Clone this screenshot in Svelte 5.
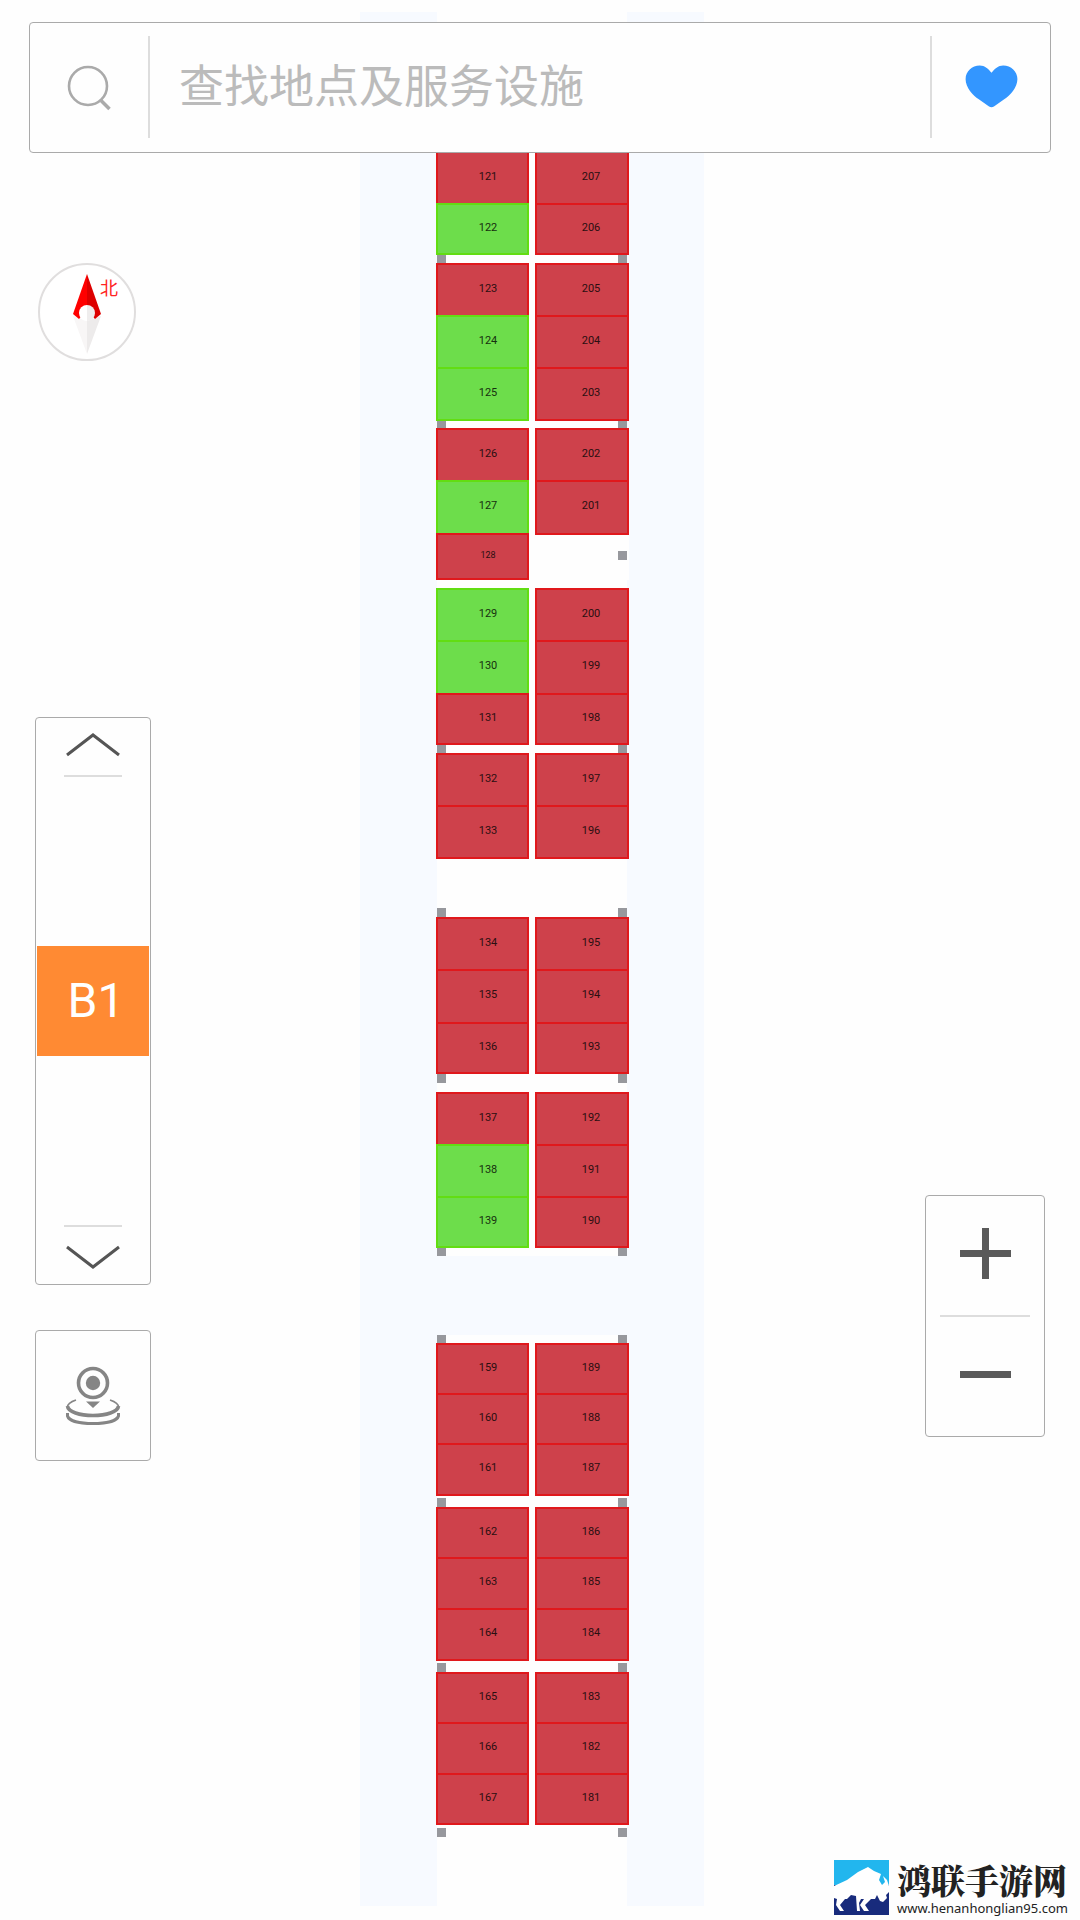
<script>
  // Depths are in map pixels; a stall marked `free` is drawn green.
  const stall = (no, depth, free = false) => ({ no, depth, free });
  const aisle = (depth, pillars = 'none') => ({ kind: 'aisle', depth, pillars });
  const block = (left, right, pillarRight = false) => ({ kind: 'block', left, right, pillarRight });

  const plan = [
    aisle(139),
    block([stall(121, 52), stall(122, 52, true)], [stall(207, 52), stall(206, 52)]),
    aisle(8, 'start'),
    block(
      [stall(123, 52), stall(124, 52, true), stall(125, 54, true)],
      [stall(205, 52), stall(204, 52), stall(203, 54)]
    ),
    aisle(7, 'start'),
    block(
      [stall(126, 52), stall(127, 53, true), stall(128, 47)],
      [stall(202, 52), stall(201, 55)],
      true
    ),
    aisle(8),
    block(
      [stall(129, 52, true), stall(130, 53, true), stall(131, 52)],
      [stall(200, 52), stall(199, 53), stall(198, 52)]
    ),
    aisle(8, 'start'),
    block([stall(132, 52), stall(133, 54)], [stall(197, 52), stall(196, 54)]),
    aisle(58, 'end'),
    block(
      [stall(134, 52), stall(135, 53), stall(136, 52)],
      [stall(195, 52), stall(194, 53), stall(193, 52)]
    ),
    aisle(18, 'start'),
    block(
      [stall(137, 52), stall(138, 52, true), stall(139, 52, true)],
      [stall(192, 52), stall(191, 52), stall(190, 52)]
    ),
    aisle(8, 'start'),
    { kind: 'road', depth: 79 },
    aisle(8, 'end'),
    block(
      [stall(159, 50), stall(160, 50), stall(161, 53)],
      [stall(189, 50), stall(188, 50), stall(187, 53)]
    ),
    aisle(11, 'end'),
    block(
      [stall(162, 50), stall(163, 51), stall(164, 53)],
      [stall(186, 50), stall(185, 51), stall(184, 53)]
    ),
    aisle(11, 'end'),
    block(
      [stall(165, 50), stall(166, 51), stall(167, 52)],
      [stall(183, 50), stall(182, 51), stall(181, 52)]
    ),
    aisle(12, 'end'),
    aisle(69)
  ];
</script>

{#snippet column(stalls, side)}
  {#each stalls as s (s.no)}
    <button class="stall {side}" class:free={s.free} class:small={s.depth < 50} style:height="{s.depth}px">
      {s.no}
    </button>
  {/each}
{/snippet}

<main class="page">
  <form class="search" role="search" onsubmit={(e) => e.preventDefault()}>
    <button class="search-go" aria-label="搜索">
      <svg width="48" height="48" viewBox="0 0 48 48" fill="none" stroke="#aaa" stroke-width="2.6">
        <circle cx="23" cy="23" r="19" />
        <path d="M36 37.500 44.500 46" stroke-width="3.600" />
      </svg>
    </button>
    <input type="text" placeholder="查找地点及服务设施" aria-label="查找地点及服务设施" />
    <button type="button" class="favourite" aria-label="收藏">
      <svg width="53" height="43" viewBox="0 0 54 44" fill="#3396ff">
        <path d="M27 8C30 4 34 .500 39 .500C47 .500 53.500 6.500 53.500 14.500C53.500 23 46 31 40 35L29.500 42.500Q27 44 24.500 42.500L14 35C8 31 .500 23 .500 14.500C.500 6.500 7 .500 15 .500C20 .500 24 4 27 8Z" />
      </svg>
    </button>
  </form>

  <aside class="rail left-rail">
    <svg class="compass" width="104" height="104" viewBox="0 0 104 104">
      <circle cx="52" cy="52" r="48" fill="#fff" stroke="#e0dede" stroke-width="2" />
      <path d="M38 56 52 94V61Z" fill="#f8f6f6" />
      <path d="M66 56 52 94V61Z" fill="#edebeb" />
      <path d="M52 14 38 54 44 59 52 50Z" fill="#ff0000" />
      <path d="M52 14 66 54 60 59 52 50Z" fill="#dd0000" />
      <path d="M52 45A8 8 0 0 0 52 61Z" fill="#fff" />
      <path d="M52 45A8 8 0 0 1 52 61Z" fill="#efeded" />
      <text x="65" y="35">北</text>
    </svg>

    <nav class="panel floors" aria-label="楼层">
      <button class="step" aria-label="上一层">
        <svg width="58" height="28" viewBox="0 0 58 28" fill="none" stroke="#555" stroke-width="3">
          <path d="M3 25 29 5 55 25" />
        </svg>
      </button>
      <button class="floor">B1</button>
      <button class="step down" aria-label="下一层">
        <svg width="58" height="28" viewBox="0 0 58 28" fill="none" stroke="#555" stroke-width="3">
          <path d="M3 3 29 23 55 3" />
        </svg>
      </button>
    </nav>

    <button class="panel locate" aria-label="定位">
      <svg width="58" height="60" viewBox="0 0 58 60" fill="none" stroke="#858585">
        <circle cx="29" cy="17" r="14.500" stroke-width="3.600" />
        <circle cx="29" cy="17" r="7.200" fill="#858585" stroke="none" />
        <path d="M22 35.500H36L29 42Z" fill="#858585" stroke="none" />
        <path d="M12 34C6 36 3.500 39 3.500 41" stroke-width="1.600" />
        <path d="M46 34C52 36 54.500 39 54.500 41" stroke-width="1.600" />
        <path d="M3.500 40C4 46 16 49.500 29 49.500S54 46 54.500 40" stroke-width="3.600" />
        <path d="M3.500 47V50C5 55 16 57.500 29 57.500S53 55 54.500 50V47" stroke-width="3" />
      </svg>
    </button>
  </aside>

  <section class="map" aria-label="B1">
    {#each plan as part}
      {#if part.kind === 'block'}
        <div class="block">
          <div class="column">{@render column(part.left, 'west')}</div>
          <div class="column">
            {@render column(part.right, 'east')}
            {#if part.pillarRight}<i class="pillar lone"></i>{/if}
          </div>
        </div>
      {:else if part.kind === 'road'}
        <div style:height="{part.depth}px"></div>
      {:else}
        <div class="aisle {part.pillars}" style:height="{part.depth}px">
          {#if part.pillars !== 'none'}
            <i class="pillar"></i><i class="pillar"></i>
          {/if}
        </div>
      {/if}
    {/each}
  </section>

  <aside class="rail right-rail">
    <div class="panel zoom">
      <button aria-label="放大">
        <svg width="51" height="51" viewBox="0 0 51 51" stroke="#5a5a5a" stroke-width="7">
          <path d="M0 25.500H51M25.500 0V51" />
        </svg>
      </button>
      <button aria-label="缩小">
        <svg width="51" height="51" viewBox="0 0 51 51" stroke="#5a5a5a" stroke-width="7">
          <path d="M0 25.500H51" />
        </svg>
      </button>
    </div>

    <footer class="brand">
      <svg width="55" height="55" viewBox="0 0 55 55">
        <path d="M0 0H55V28H0Z" fill="#22b6ee" />
        <path d="M0 25H55V55H0Z" fill="#182b7c" />
        <path d="M0 26 13 20 24 12 34 7 40 11 47 14 45 20 48 25 51 22 49 16 53 20 55 26V32L52 35 53 38 49 42 46 41 43 35 41 39 37 39 31 45 35 51H30L26 45 30 39 27 39 25 43 26 51H23L22 36 17 35 13 39 11 39 6 45 10 51H6L2 45 3 39 0 38Z" fill="#fff" />
      </svg>
      <div class="brand-text">
        <strong>鸿联手游网</strong>
        <span>www.henanhonglian95.com</span>
      </div>
    </footer>
  </aside>
</main>

<style>
  :global(body) {
    background: #fefefe;
  }

  .page {
    position: relative;
    display: grid;
    grid-template-columns: 45fr 344px 47fr;
    box-sizing: border-box;
    min-height: 100vh;
    padding: 12px 0 0;
    font-family: Roboto, "Noto Sans CJK SC", sans-serif;
  }

  button {
    margin: 0;
    padding: 0;
    border: 0;
    background: none;
    font-family: inherit;
    color: inherit;
    cursor: pointer;
  }

  svg {
    display: block;
  }

  .search {
    position: absolute;
    top: 22px;
    left: 29px;
    right: 29px;
    display: flex;
    align-items: center;
    box-sizing: border-box;
    height: 131px;
    padding-bottom: 2px;
    border: 1px solid #aaa;
    border-radius: 4px;
    background: #fefefe;
  }

  .search-go,
  .favourite {
    display: flex;
    align-items: center;
    justify-content: center;
    box-sizing: border-box;
    height: 102px;
  }

  .search-go {
    width: 120px;
    border-right: 2px solid #ddd;
  }

  .favourite {
    width: 120px;
    border-left: 2px solid #ddd;
  }

  .search input {
    box-sizing: border-box;
    flex: 1;
    min-width: 0;
    height: 102px;
    padding: 0 29px 6px;
    border: 0;
    outline: 0;
    background: none;
    font-family: "Noto Sans CJK SC", sans-serif;
    font-size: 45px;
    color: #333;
  }

  .search input::placeholder {
    color: #bbb;
    opacity: 1;
  }

  .rail {
    display: flex;
    flex-direction: column;
  }

  .left-rail {
    align-items: flex-start;
    padding: 248px 0 0 35px;
  }

  .compass text {
    font-family: "Noto Sans CJK SC", sans-serif;
    font-size: 18px;
    fill: #f22;
  }

  .panel {
    box-sizing: border-box;
    border: 1px solid #aaa;
    border-radius: 4px;
    background: #fefefe;
  }

  .floors {
    display: flex;
    flex-direction: column;
    align-items: center;
    justify-content: space-between;
    width: 116px;
    height: 568px;
    margin-top: 353px;
    padding: 0 1px;
  }

  .step {
    display: flex;
    align-items: center;
    justify-content: center;
    box-sizing: border-box;
    width: 58px;
    height: 59px;
    padding-bottom: 6px;
    border-bottom: 2px solid #ddd;
  }

  .step.down {
    padding-bottom: 0;
    padding-top: 4px;
    border-top: 2px solid #ddd;
    border-bottom: 0;
  }

  .floor {
    width: 100%;
    height: 110px;
    padding-left: 6px;
    background: #ff8a33;
    color: #fff;
    font-size: 48px;
    line-height: 56px;
  }

  .locate {
    display: flex;
    align-items: center;
    justify-content: center;
    width: 116px;
    height: 131px;
    margin-top: 45px;
  }

  .map {
    box-sizing: border-box;
    height: 1894px;
    padding: 0 75px 0 76px;
    background: #f7faff;
  }

  .block {
    display: grid;
    grid-template-columns: 93px 94px;
    column-gap: 6px;
    background: #fefefe;
  }

  .column {
    display: flex;
    flex-direction: column;
  }

  .stall {
    box-sizing: border-box;
    border: 2px solid #e0181c;
    border-bottom-width: 0;
    background: #ce414b;
    font-size: 11px;
    line-height: 12px;
    color: #2b0f11;
  }

  .stall:last-of-type {
    border-bottom-width: 2px;
  }

  .stall.free {
    border-color: #62dd12;
    background: #6ddd4b;
    color: #16300f;
  }

  .stall.west {
    padding: 0 0 3px 11px;
  }

  .stall.east {
    padding: 0 0 3px 18px;
  }

  .stall.small {
    font-size: 9px;
  }

  .aisle {
    display: flex;
    justify-content: space-between;
    margin: 0 2px 0 1px;
    background: #fefefe;
  }

  .aisle.start {
    align-items: flex-start;
  }

  .aisle.end {
    align-items: flex-end;
  }

  .pillar {
    width: 9px;
    height: 9px;
    max-height: 100%;
    background: #97989d;
  }

  .pillar.lone {
    align-self: flex-end;
    margin: 16px 2px 0 0;
  }

  .right-rail {
    align-items: flex-end;
    justify-content: space-between;
    padding: 1183px 0 4px;
  }

  .zoom {
    display: flex;
    flex-direction: column;
    align-items: center;
    width: 120px;
    height: 242px;
    margin-right: 35px;
  }

  .zoom button {
    display: flex;
    flex: 1;
    align-items: center;
    justify-content: center;
    width: 90px;
    padding-bottom: 4px;
  }

  .zoom button + button {
    border-top: 2px solid #ddd;
  }

  .brand {
    display: flex;
    gap: 8px;
    margin-right: 12px;
  }

  .brand-text {
    display: flex;
    flex-direction: column;
    color: #222;
  }

  .brand-text strong {
    font-family: "Noto Serif CJK SC", "Noto Sans CJK SC", serif;
    font-size: 34px;
    font-weight: 900;
    line-height: 40px;
  }

  .brand-text span {
    font-family: "Noto Sans", sans-serif;
    font-size: 13px;
    line-height: 16px;
  }
</style>
